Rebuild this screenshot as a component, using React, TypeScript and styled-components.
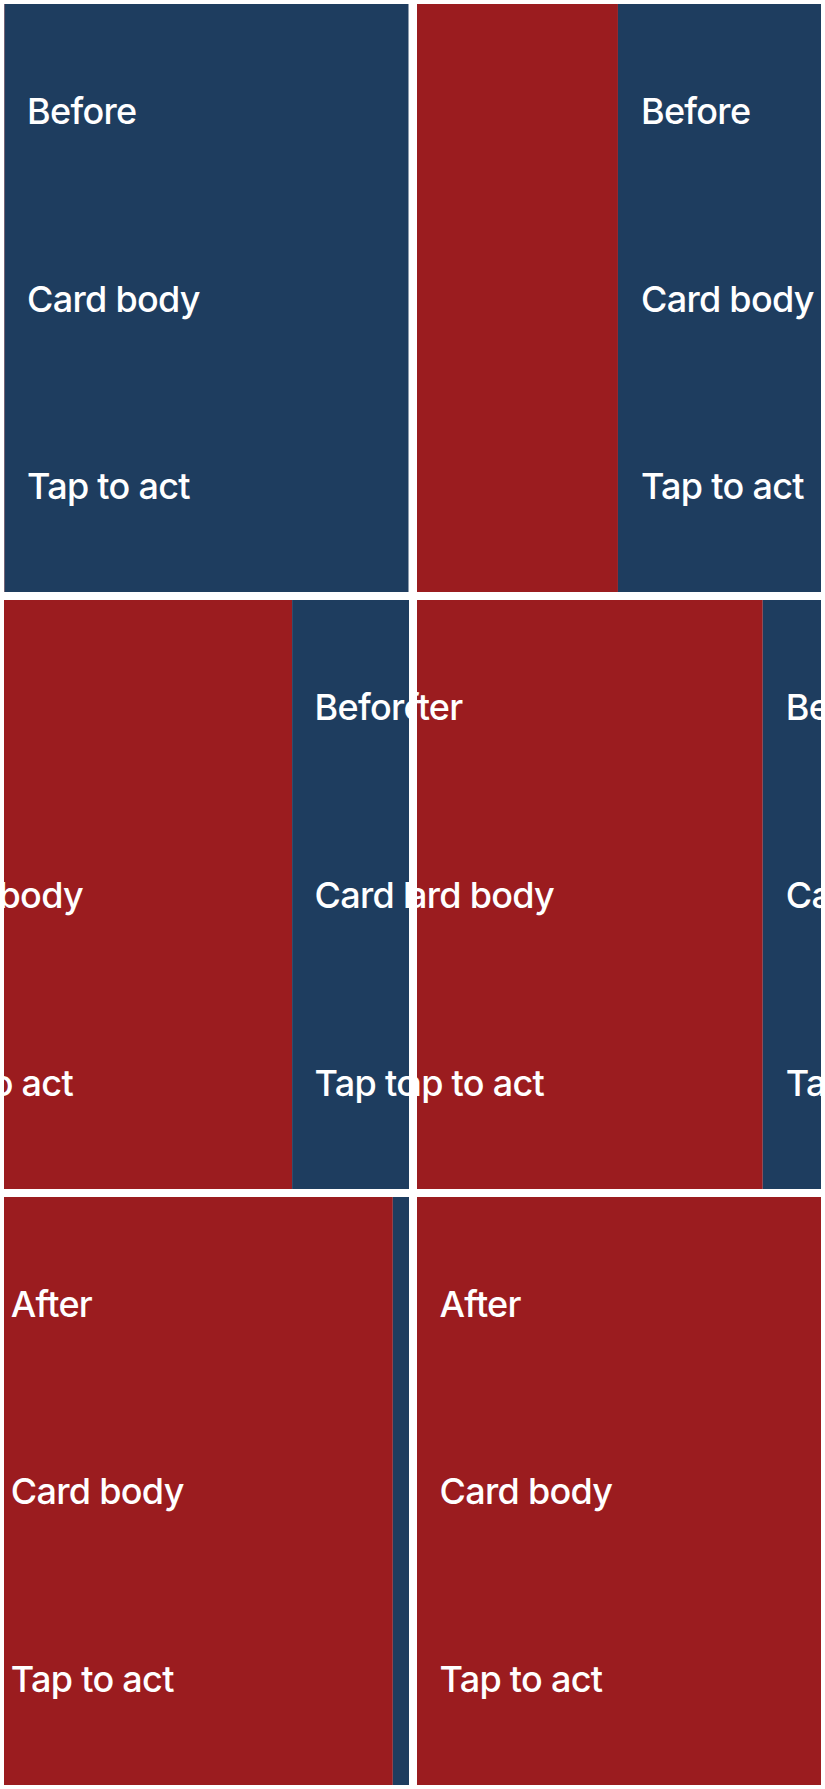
import React from "react";
import styled, { createGlobalStyle } from "styled-components";

type Frame = {
  progress: number;
};

// progress of the slide: 0 shows "Before", 1 shows "After"
const frames: Frame[] = [
  { progress: 0 },
  { progress: 0.498 },
  { progress: 0.711 },
  { progress: 0.856 },
  { progress: 0.96 },
  { progress: 1 },
];

const lines = ["Card body", "Tap to act"];

const GlobalStyle = createGlobalStyle`
  html, body {
    margin: 0;
    padding: 0;
    background: #ffffff;
  }
`;

const Card: React.FC<{ title: string; tone: "before" | "after" }> = ({
  title,
  tone,
}) => {
  return (
    <Panel $tone={tone}>
      <Line>{title}</Line>
      {lines.map((text) => (
        <Line key={text}>{text}</Line>
      ))}
    </Panel>
  );
};

const App: React.FC = () => {
  return (
    <>
      <GlobalStyle />
      <Board>
        {frames.map((frame, index) => (
          <Cell key={index}>
            <Track $progress={frame.progress}>
              <Card title="After" tone="after" />
              <Card title="Before" tone="before" />
            </Track>
          </Cell>
        ))}
      </Board>
    </>
  );
};

const Board = styled.div`
  display: grid;
  grid-template-columns: repeat(2, 1fr);
  grid-template-rows: repeat(3, 1fr);
  gap: 8px;
  padding: 4px;
  height: 100vh;
  box-sizing: border-box;
  background: #ffffff;
`;

const Cell = styled.div`
  position: relative;
  overflow: hidden;
  min-width: 0;
  min-height: 0;
`;

const Track = styled.div<{ $progress: number }>`
  display: flex;
  width: 200%;
  height: 100%;
  transform: translateX(${(p) => (p.$progress - 1) * 50}%);
`;

const Panel = styled.div<{ $tone: "before" | "after" }>`
  flex: 1 1 0;
  display: grid;
  grid-template-rows: repeat(3, 1fr);
  align-items: center;
  padding: 13px 23px 12px;
  box-sizing: border-box;
  background: ${(p) => (p.$tone === "after" ? "#9b1c1f" : "#1e3d5f")};
  color: #ffffff;
`;

const Line = styled.div`
  font-family: Inter, "Liberation Sans", sans-serif;
  font-size: 36px;
  font-weight: 450;
  letter-spacing: -0.7px;
  white-space: nowrap;
`;

export default App;
